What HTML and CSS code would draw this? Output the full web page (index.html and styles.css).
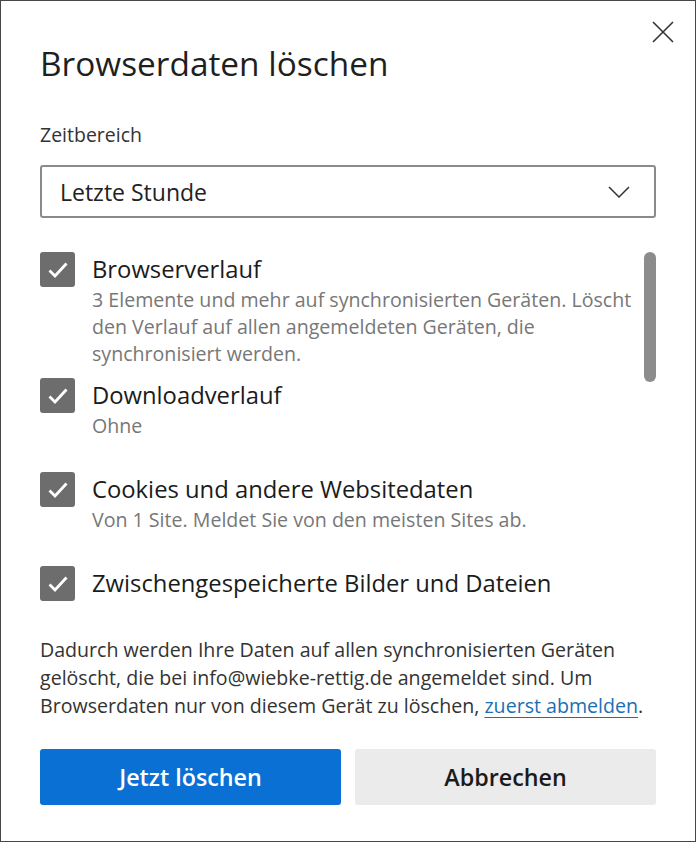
FILE: index.html
```html
<!DOCTYPE html>
<html lang="de">
<head>
<meta charset="utf-8">
<title>Browserdaten löschen</title>
<link rel="stylesheet" href="styles.css">
</head>
<body>
<div class="dialog">
  <button class="close" aria-label="Schließen">
    <svg width="22" height="22" viewBox="0 0 22 22"><path d="M1 1 L21 21 M21 1 L1 21" stroke="#333" stroke-width="1.6" fill="none"/></svg>
  </button>
  <h1 class="title">Browserdaten löschen</h1>
  <div class="label">Zeitbereich</div>
  <div class="select">
    <span>Letzte Stunde</span>
    <svg width="22" height="12" viewBox="0 0 22 12"><path d="M1 1 L11 11 L21 1" stroke="#333" stroke-width="1.5" fill="none"/></svg>
  </div>
  <div class="list">
    <div class="items">
      <div class="item">
        <span class="box"><svg width="22" height="18" viewBox="0 0 22 18"><path d="M2.5 9.5 L8 15 L19.5 2.5" stroke="#fff" stroke-width="2.8" fill="none"/></svg></span>
        <div class="text">
          <div class="name">Browserverlauf</div>
          <div class="desc">3 Elemente und mehr auf synchronisierten Geräten. Löscht den Verlauf auf allen angemeldeten Geräten, die synchronisiert werden.</div>
        </div>
      </div>
      <div class="item first-gap">
        <span class="box"><svg width="22" height="18" viewBox="0 0 22 18"><path d="M2.5 9.5 L8 15 L19.5 2.5" stroke="#fff" stroke-width="2.8" fill="none"/></svg></span>
        <div class="text">
          <div class="name">Downloadverlauf</div>
          <div class="desc">Ohne</div>
        </div>
      </div>
      <div class="item gap">
        <span class="box"><svg width="22" height="18" viewBox="0 0 22 18"><path d="M2.5 9.5 L8 15 L19.5 2.5" stroke="#fff" stroke-width="2.8" fill="none"/></svg></span>
        <div class="text">
          <div class="name">Cookies und andere Websitedaten</div>
          <div class="desc">Von 1 Site. Meldet Sie von den meisten Sites ab.</div>
        </div>
      </div>
      <div class="item gap">
        <span class="box"><svg width="22" height="18" viewBox="0 0 22 18"><path d="M2.5 9.5 L8 15 L19.5 2.5" stroke="#fff" stroke-width="2.8" fill="none"/></svg></span>
        <div class="text">
          <div class="name">Zwischengespeicherte Bilder und Dateien</div>
        </div>
      </div>
    </div>
    <div class="scrollbar"></div>
  </div>
  <p class="note">Dadurch werden Ihre Daten auf allen synchronisierten Geräten gelöscht, die bei info@wiebke-rettig.de angemeldet sind. Um Browserdaten nur von diesem Gerät zu löschen, <a href="#">zuerst abmelden</a>.</p>
  <div class="actions">
    <button class="btn primary">Jetzt löschen</button>
    <button class="btn secondary">Abbrechen</button>
  </div>
</div>
</body>
</html>
```
FILE: styles.css
```css
* { box-sizing: border-box; }
html, body { margin: 0; padding: 0; background: #fff; }
body { font-family: "Open Sans", "Noto Sans", sans-serif; color: #1b1b1b; }
.dialog {
  position: relative;
  width: 696px;
  height: 842px;
  border: 1px solid #474747;
  padding: 0 39px;
  display: flex;
  flex-direction: column;
  overflow: hidden;
}
.close {
  position: absolute;
  top: 20px;
  right: 21px;
  border: 0;
  background: none;
  padding: 0;
  width: 22px;
  height: 22px;
}
.close svg { display: block; }
.title {
  margin: 40px 0 0;
  font-size: 33.4px;
  font-weight: 400;
  line-height: 44px;
  color: #1f1f1f;
}
.label {
  margin-top: 37px;
  font-size: 19.5px;
  line-height: 26px;
  color: #333;
}
.select {
  margin-top: 17px;
  height: 53px;
  border: 2px solid #8a8a8a;
  border-radius: 3px;
  display: flex;
  align-items: center;
  justify-content: space-between;
  padding: 0 24px 0 18px;
  font-size: 23px;
  color: #222;
}
.select svg { display: block; }
.list {
  margin-top: 34px;
  display: flex;
  gap: 8px;
  height: 360px;
}
.items { flex: 1; }
.item { display: flex; gap: 17px; }
.item.first-gap { margin-top: 11px; }
.item.gap { margin-top: 33px; }
.box {
  flex: none;
  width: 35px;
  height: 35px;
  border-radius: 3px;
  background: #6d6d6d;
  display: flex;
  align-items: center;
  justify-content: center;
}
.box svg { display: block; }
.name {
  font-size: 23.8px;
  line-height: 34px;
  color: #1b1b1b;
}
.desc {
  font-size: 19.6px;
  line-height: 27px;
  color: #777;
}
.scrollbar {
  flex: none;
  width: 12px;
  height: 130px;
  border-radius: 6px;
  background: #8c8c8c;
}
.note {
  margin: 24px 0 0;
  font-size: 19.6px;
  line-height: 28px;
  color: #333;
}
.note a { color: #1b6fb5; text-decoration: underline; text-underline-offset: 4px; text-decoration-thickness: 1px; }
.actions {
  margin-top: 29px;
  display: flex;
  gap: 14px;
}
.btn {
  flex: 1;
  height: 56px;
  border: 0;
  border-radius: 3px;
  font-family: inherit;
  font-size: 23.3px;
  font-weight: 600;
}
.primary { background: #0b70d3; color: #fff; }
.secondary { background: #ebebeb; color: #1b1b1b; }
```
